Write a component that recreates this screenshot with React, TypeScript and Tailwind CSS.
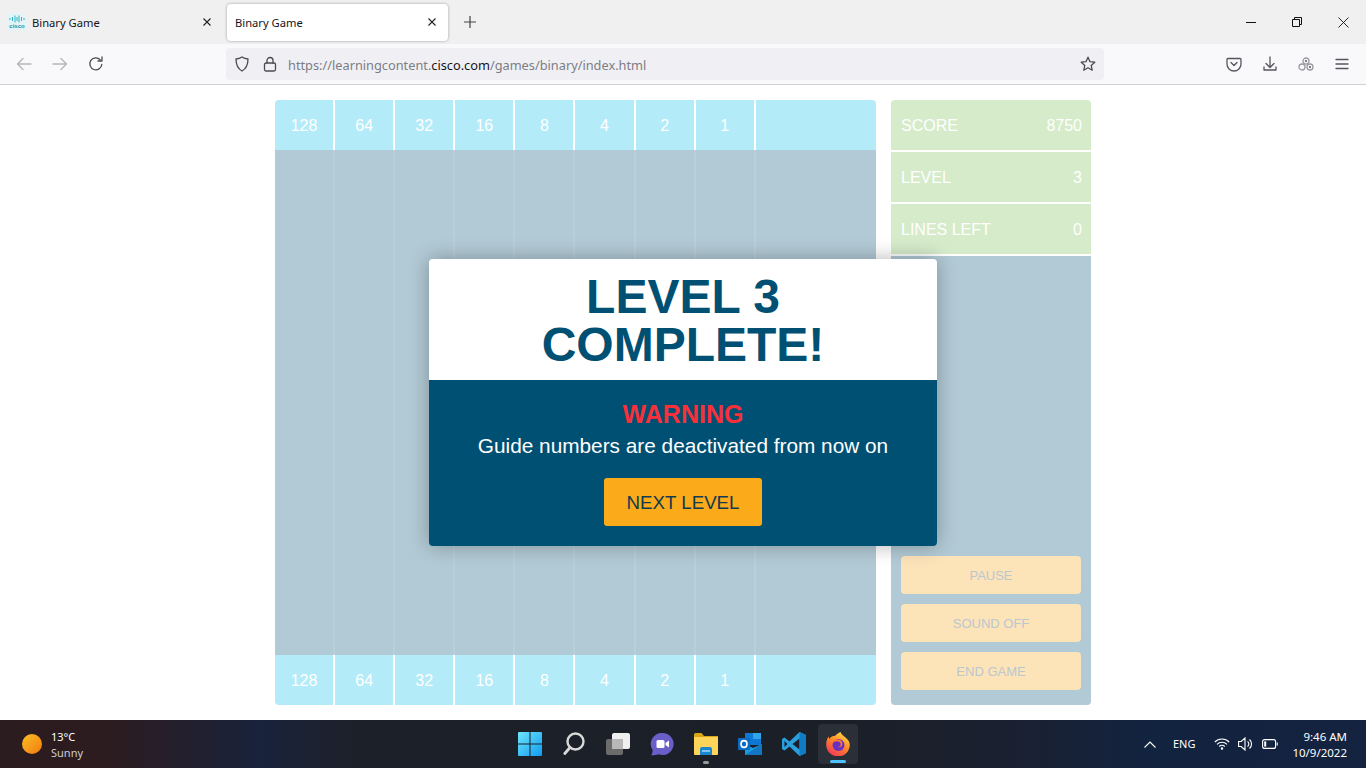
const weights = ['128', '64', '32', '16', '8', '4', '2', '1', '']

function CiscoFavicon() {
  return (
    <div className="w-[18px] h-[18px] bg-[#e4f4f6] flex flex-col items-center justify-center">
      <svg width="16" height="8" viewBox="0 0 16 8" stroke="#2bb5c9" strokeWidth="1">
        <path d="M1 3v2M3.500 2v4M6 .5v7M8 2v4M10 .5v7M12.500 2v4M15 3v2" />
      </svg>
      <span className="text-[6px] leading-[7px] font-bold text-[#1d8fa3] font-['Liberation_Sans',sans-serif]">cisco</span>
    </div>
  )
}

function CloseIcon() {
  return (
    <svg width="10" height="10" viewBox="0 0 10 10" stroke="#222" strokeWidth="1.100">
      <path d="M1.500 1.500l7 7M8.500 1.500l-7 7" />
    </svg>
  )
}

function TabStrip() {
  return (
    <div className="h-[44px] bg-[#f0f0f0] flex items-center pl-[2px] pr-0">
      <div className="w-[222px] h-[36px] flex items-center pl-[6px] pr-[12px] mr-[3px]">
        <CiscoFavicon />
        <span className="ml-[6px] mt-[2px] text-[11.200px] text-[#15141a] flex-1">Binary Game</span>
        <CloseIcon />
      </div>
      <div className="w-[221px] h-[37px] bg-white rounded-[4px] shadow-[0_0_3px_rgba(0,0,0,0.35)] flex items-center pl-[8px] pr-[11px]">
        <span className="mt-[2px] text-[11.200px] text-[#15141a] flex-1">Binary Game</span>
        <CloseIcon />
      </div>
      <svg className="ml-[16px]" width="12" height="12" viewBox="0 0 12 12" stroke="#444" strokeWidth="1.200">
        <path d="M6 0v12M0 6h12" />
      </svg>
      <div className="ml-auto flex items-center">
        <div className="w-[46px] flex justify-center">
          <svg width="10" height="10" viewBox="0 0 10 10" stroke="#111" strokeWidth="1">
            <path d="M0 5.500h10" />
          </svg>
        </div>
        <div className="w-[46px] flex justify-center">
          <svg width="10" height="10" viewBox="0 0 10 10" fill="none" stroke="#111" strokeWidth="1">
            <path d="M.5 2.500h7v7h-7zM2.500 2.500v-2h7v7h-2" />
          </svg>
        </div>
        <div className="w-[46px] flex justify-center">
          <svg width="11" height="11" viewBox="0 0 11 11" stroke="#111" strokeWidth="0.900">
            <path d="M.5.500l10 10M10.500.500l-10 10" />
          </svg>
        </div>
      </div>
    </div>
  )
}

function ToolIcon({ children, className }: { children: React.ReactNode; className?: string }) {
  return (
    <svg className={className} width="16" height="16" viewBox="0 0 16 16" fill="none" stroke="currentColor" strokeWidth="1.300" strokeLinecap="round" strokeLinejoin="round">
      {children}
    </svg>
  )
}

function Toolbar() {
  return (
    <div className="h-[41px] bg-[#f9f9fb] border-b border-[#cfcfd8] flex items-center relative">
      <ToolIcon className="ml-[16px] text-[#b4b4ba]">
        <path d="M15 8H1.500M7 2.500 1.500 8 7 13.500" />
      </ToolIcon>
      <ToolIcon className="ml-[20px] text-[#b4b4ba]">
        <path d="M1 8h13.500M9 2.500 14.500 8 9 13.500" />
      </ToolIcon>
      <ToolIcon className="ml-[20px] text-[#4a4a50]">
        <path d="M13.800 8.500A6 6 0 1 1 12 3.500M14 1v4h-4" />
      </ToolIcon>
      <div className="ml-[122px] w-[878px] h-[32px] bg-[#f0f0f4] rounded-[4px] flex items-center pl-[8px] pr-[8px] mt-[-1px]">
        <ToolIcon className="text-[#4a4a50]">
          <path d="M8 1c2 1.300 4 1.800 6 2 0 5-1.500 9.500-6 12C3.500 12.500 2 8 2 3c2-.2 4-.7 6-2z" />
        </ToolIcon>
        <ToolIcon className="ml-[12px] text-[#4a4a50]">
          <rect x="2.500" y="7" width="11" height="8" rx="1.500" />
          <path d="M5 7V4.500a3 3 0 0 1 6 0V7" />
        </ToolIcon>
        <div className="ml-[10px] mt-[5px] text-[12.770px] text-[#7d7d85] flex-1">
          https://learningcontent.<span className="text-[#15141a]">cisco.com</span>/games/binary/index.html
        </div>
        <ToolIcon className="text-[#4a4a50]">
          <path d="M8 1.200l2 4.500 4.800.500-3.600 3.200 1 4.800L8 11.800l-4.200 2.400 1-4.800L1.200 6.200 6 5.700z" />
        </ToolIcon>
      </div>
      <div className="ml-auto flex items-center gap-[20px] pr-[16px] text-[#55555c]">
        <ToolIcon>
          <path d="M2 2.500h12a1 1 0 0 1 1 1V8a7 7 0 0 1-14 0V3.500a1 1 0 0 1 1-1z" />
          <path d="M5 6.500l3 3 3-3" />
        </ToolIcon>
        <ToolIcon>
          <path d="M8 1v10M4 7.500 8 11.500l4-4M2 11v3h12v-3" />
        </ToolIcon>
        <ToolIcon className="text-[#9a9aa0]">
          <circle cx="8" cy="5" r="3" />
          <circle cx="4" cy="11" r="3" />
          <circle cx="12" cy="11" r="3" />
          <circle cx="12" cy="11" r="1" fill="#55555c" stroke="none" />
          <circle cx="8" cy="5" r="1" fill="#55555c" stroke="none" />
        </ToolIcon>
        <ToolIcon>
          <path d="M2 3.500h12M2 8h12M2 12.500h12" />
        </ToolIcon>
      </div>
    </div>
  )
}

function WeightRow({ position }: { position: 'top' | 'bottom' }) {
  return (
    <div className={`h-[50px] flex bg-[#b3ebf9] overflow-hidden ${position === 'top' ? 'rounded-t-[4px]' : 'rounded-b-[4px]'}`}>
      {weights.map((w, i) => (
        <div
          key={i}
          className={`flex items-center justify-center pt-[2px] text-[16px] text-white ${i === 8 ? 'flex-1' : 'w-[10%] border-r-2 border-white'}`}
        >
          {w}
        </div>
      ))}
    </div>
  )
}

function Board() {
  return (
    <div className="w-[601px] flex flex-col">
      <WeightRow position="top" />
      <div className="h-[505px] bg-[#b2cad5] flex">
        {weights.map((w, i) => (
          <div key={i} className={i === 8 ? 'flex-1' : 'w-[10%] border-r-2 border-[#b9cfda]'} />
        ))}
      </div>
      <WeightRow position="bottom" />
    </div>
  )
}

function StatRow({ label, value, first }: { label: string; value: string; first?: boolean }) {
  return (
    <div className={`h-[50px] bg-[#d5ebca] flex items-center justify-between pl-[10px] pr-[9px] pt-[2px] text-[16px] text-white ${first ? 'rounded-t-[4px]' : ''}`}>
      <span>{label}</span>
      <span>{value}</span>
    </div>
  )
}

function SideButton({ label }: { label: string }) {
  return (
    <div className="h-[38px] bg-[#fde3b8] rounded-[4px] flex items-center justify-center pt-[2px] text-[13px] text-[#b9c8cf]">
      {label}
    </div>
  )
}

function SidePanel() {
  return (
    <div className="w-[200px] flex flex-col gap-[2px]">
      <StatRow label="SCORE" value="8750" first />
      <StatRow label="LEVEL" value="3" />
      <StatRow label="LINES LEFT" value="0" />
      <div className="flex-1 bg-[#b2cad5] rounded-b-[4px] flex flex-col justify-end gap-[10px] px-[10px] pb-[15px]">
        <SideButton label="PAUSE" />
        <SideButton label="SOUND OFF" />
        <SideButton label="END GAME" />
      </div>
    </div>
  )
}

function Modal() {
  return (
    <div className="absolute left-[154px] top-[159px] w-[508px] rounded-[4px] overflow-hidden shadow-[0_0_20px_rgba(0,0,0,0.3)]">
      <div className="h-[121px] bg-white flex items-center justify-center pt-[3px] text-center text-[48px] leading-[48px] font-bold text-[#005073]">
        <div>
          LEVEL 3
          <br />
          COMPLETE!
        </div>
      </div>
      <div className="h-[166px] bg-[#005073] flex flex-col items-center pt-[20px]">
        <div className="text-[25px] leading-[28px] font-bold text-[#f9303a]">WARNING</div>
        <div className="mt-[6px] text-[20.800px] leading-[24px] text-white">Guide numbers are deactivated from now on</div>
        <div className="mt-[20px] w-[158px] h-[48px] bg-[#fbaa19] rounded-[3px] flex items-center justify-center pt-[2px] text-[18.720px] text-[#0f3a52]">
          NEXT LEVEL
        </div>
      </div>
    </div>
  )
}

function StartIcon() {
  return (
    <svg width="24" height="24" viewBox="0 0 24 24">
      <defs>
        <linearGradient id="win" x1="0" y1="0" x2="1" y2="1">
          <stop offset="0" stopColor="#6fe6fb" />
          <stop offset="1" stopColor="#0f9bf0" />
        </linearGradient>
      </defs>
      <path fill="url(#win)" d="M0 1a1 1 0 0 1 1-1h10.500v11.500H0zM12.500 0H23a1 1 0 0 1 1 1v10.500H12.500zM0 12.500h11.500V24H1a1 1 0 0 1-1-1zM12.500 12.500H24V23a1 1 0 0 1-1 1H12.500z" />
    </svg>
  )
}

function SearchIcon() {
  return (
    <svg width="22" height="24" viewBox="0 0 22 24" fill="none">
      <circle cx="12.500" cy="9.500" r="8" stroke="#d8d8d8" strokeWidth="2.400" />
      <path d="M7 15.500 1.800 21.500" stroke="#d8d8d8" strokeWidth="2.800" strokeLinecap="round" />
    </svg>
  )
}

function TaskViewIcon() {
  return (
    <svg width="24" height="22" viewBox="0 0 24 22">
      <rect x="0" y="6" width="17" height="16" rx="2" fill="#6b6b6b" />
      <rect x="6" y="0" width="18" height="16" rx="2" fill="#f0f0f0" />
      <rect x="6" y="6" width="11" height="10" fill="#b8b8b8" />
    </svg>
  )
}

function ChatIcon() {
  return (
    <svg width="24" height="24" viewBox="0 0 24 24">
      <path fill="#6a5fc8" d="M12.500 1a11 11 0 1 1-4 21.200C6 23 3 23.500 1 23.200c1-1 1.500-2.500 1.700-5A11 11 0 0 1 12.500 1z" />
      <rect x="6.500" y="8" width="8" height="8" rx="1.500" fill="#fff" />
      <path fill="#fff" d="M15.500 11l3.500-2.500v7L15.500 13z" />
    </svg>
  )
}

function FolderIcon() {
  return (
    <svg width="24" height="22" viewBox="0 0 24 22">
      <path fill="#d9a514" d="M0 1.500A1.500 1.500 0 0 1 1.500 0h6L10 3h14v6H0z" />
      <path fill="#fcd45a" d="M0 4h24v17a1 1 0 0 1-1 1H1a1 1 0 0 1-1-1z" />
      <path fill="#1a86d0" d="M6 16a2 2 0 0 1 2-2h8a2 2 0 0 1 2 2v6H6z" />
      <rect x="8" y="17" width="8" height="2" fill="#7fc4f0" />
    </svg>
  )
}

function OutlookIcon() {
  return (
    <svg width="24" height="24" viewBox="0 0 24 24">
      <rect x="7" y="1" width="16" height="12" fill="#0e78d4" />
      <rect x="15" y="1" width="8" height="6" fill="#30a5ea" />
      <path fill="#1c9be0" d="M7 12l8 4 9-4v11H7z" />
      <path fill="#0a5db0" d="M7 23l17-11v11z" opacity="0.600" />
      <rect x="0" y="6" width="12" height="12" rx="1" fill="#0b6cc4" />
      <ellipse cx="6" cy="12" rx="3" ry="3.400" fill="none" stroke="#fff" strokeWidth="1.600" />
    </svg>
  )
}

function VsCodeIcon() {
  return (
    <svg width="24" height="24" viewBox="0 0 24 24">
      <path fill="#2a9fe0" d="M17.500 0 24 3v18l-6.500 3L7.500 14.500 2.500 18.500 0 17V7l2.500-1.500 5 4z" />
      <path fill="#1a1f2a" d="M17.500 6.500 10.500 12l7 5.500zM2.500 9v6l3-3z" />
      <path fill="#0f7cc4" d="M17.500 0 24 3v18l-6.500 3z" />
    </svg>
  )
}

function FirefoxIcon() {
  return (
    <svg width="24" height="24" viewBox="0 0 24 24">
      <defs>
        <linearGradient id="ff" x1="0.800" y1="0" x2="0.200" y2="1">
          <stop offset="0" stopColor="#ffe24a" />
          <stop offset="0.450" stopColor="#ff8a24" />
          <stop offset="1" stopColor="#f0305e" />
        </linearGradient>
      </defs>
      <path fill="url(#ff)" d="M14.500 0c.8 2.500 3 3.800 5 5.500 2.800 2.300 4.300 4.500 4.300 7.500A11.800 11.800 0 0 1 12 24.500 11.800 11.800 0 0 1 .2 12.500C.2 9.500 1 6.500 2.500 4.500c.2 1 .5 1.800 1 2.200C5 4.500 7 4 8.500 4c1.500-.8 2-1.800 3-2.300 1-.7 2-1.200 3-1.700z" />
      <circle cx="12.500" cy="13" r="6" fill="#6a2fc0" />
      <path fill="#ff7a2a" d="M5.500 12c1-3.500 4-5 7-4.500 3 .5 4.800 3.300 3.500 6-.8 1.500-2.500 2-4 1.500 3 0 3.500-3.500 1.500-5-2.500-1.500-6-.5-8 2z" />
    </svg>
  )
}

function Taskbar() {
  return (
    <div className="h-[48px] relative flex items-center bg-[linear-gradient(90deg,#2b1c1f_0%,#2c1b1f_8%,#19233c_19%,#1c2028_26%,#1b1f28_62%,#1a2030_74%,#12233f_84%,#14233f_100%)] font-['Noto_Sans',sans-serif]">
      <div className="w-[20px] h-[20px] ml-[22px] rounded-full bg-[linear-gradient(135deg,#f8c021,#f27a12)]" />
      <div className="ml-[9px] mt-[2px] flex flex-col">
        <span className="text-[11px] leading-[16px] text-white">13°C</span>
        <span className="text-[11px] leading-[16px] text-[#cfcfcf]">Sunny</span>
      </div>
      <div className="absolute left-[508px] top-0 h-[48px] flex items-center">
        <div className="w-[44px] flex justify-center"><StartIcon /></div>
        <div className="w-[44px] flex justify-center"><SearchIcon /></div>
        <div className="w-[44px] flex justify-center"><TaskViewIcon /></div>
        <div className="w-[44px] flex justify-center"><ChatIcon /></div>
        <div className="w-[44px] h-[48px] relative flex items-center justify-center">
          <FolderIcon />
          <div className="absolute bottom-[4px] w-[6px] h-[3px] rounded-full bg-[#9a9a9a]" />
        </div>
        <div className="w-[44px] flex justify-center"><OutlookIcon /></div>
        <div className="w-[44px] flex justify-center"><VsCodeIcon /></div>
        <div className="w-[40px] h-[40px] ml-[2px] relative flex items-center justify-center rounded-[4px] bg-[#2b3038]">
          <FirefoxIcon />
          <div className="absolute bottom-[1px] w-[16px] h-[3px] rounded-full bg-[#4cc2ff]" />
        </div>
      </div>
      <div className="ml-auto flex items-center text-white">
        <svg width="12" height="7" viewBox="0 0 12 7" fill="none" stroke="#fff" strokeWidth="1.100">
          <path d="M.500 6.500 6 1l5.500 5.500" />
        </svg>
        <span className="ml-[17px] text-[11px]">ENG</span>
        <svg className="ml-[19px]" width="16" height="12" viewBox="0 0 16 12" fill="none" stroke="#fff" strokeWidth="1.100">
          <path d="M.8 4a10 10 0 0 1 14.400 0M3 6.300a7 7 0 0 1 10 0M5.200 8.500a4 4 0 0 1 5.600 0" />
          <circle cx="8" cy="10.500" r=".7" fill="#fff" />
        </svg>
        <svg className="ml-[8px]" width="16" height="14" viewBox="0 0 16 14" fill="none" stroke="#fff" strokeWidth="1.100">
          <path d="M.6 4.500h2.600L7 1v12L3.200 9.500H.6zM9.500 4.500a3 3 0 0 1 0 5M11.500 2.500a6 6 0 0 1 0 9" />
        </svg>
        <svg className="ml-[8px]" width="16" height="10" viewBox="0 0 16 10" fill="none" stroke="#fff" strokeWidth="1.100">
          <rect x=".6" y=".6" width="13" height="8.800" rx="2" />
          <rect x="2.200" y="2.400" width="2" height="5.200" fill="#fff" stroke="none" />
          <path d="M15.200 3.500v3" />
        </svg>
        <div className="ml-[14px] mr-[19px] mt-[1px] flex flex-col items-end text-[11.500px] leading-[16px]">
          <span>9:46 AM</span>
          <span>10/9/2022</span>
        </div>
      </div>
    </div>
  )
}

export default function App() {
  return (
    <div className="h-screen w-full overflow-hidden bg-white flex flex-col font-['Noto_Sans',sans-serif]">
      <TabStrip />
      <Toolbar />
      <div className="flex-1 flex justify-center pt-[15px] font-['Liberation_Sans',Arial,sans-serif]">
        <div className="relative flex gap-[15px] h-[605px]">
          <Board />
          <SidePanel />
          <Modal />
        </div>
      </div>
      <Taskbar />
    </div>
  )
}
